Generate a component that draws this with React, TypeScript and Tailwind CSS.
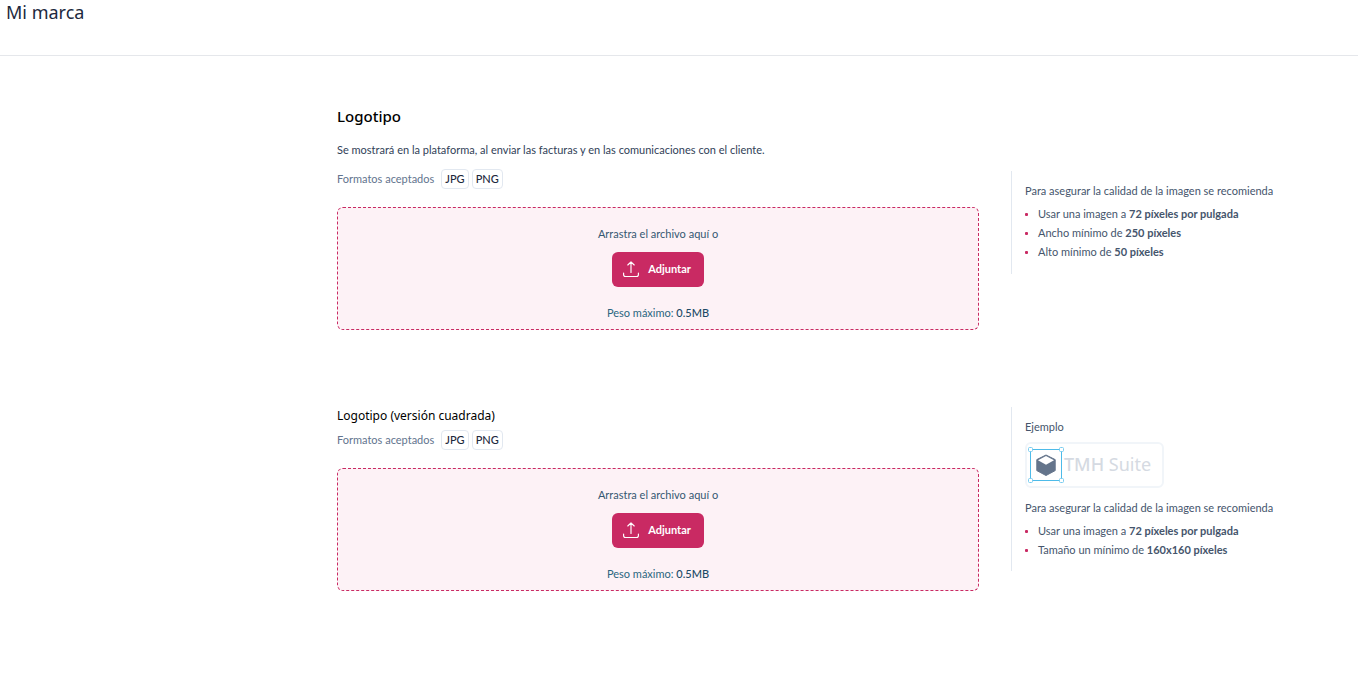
import type { ReactNode } from "react";

function Formats() {
  return (
    <div className="flex items-center gap-[3px] text-[11px] leading-[18px] text-slate-500">
      <span className="mr-1">Formatos aceptados</span>
      {["JPG", "PNG"].map((format) => (
        <span
          key={format}
          className="rounded border border-slate-200 px-[3px] font-medium text-slate-800"
        >
          {format}
        </span>
      ))}
    </div>
  );
}

function UploadIcon() {
  return (
    <svg
      aria-hidden="true"
      className="size-4"
      viewBox="0 0 16 16"
      fill="none"
      stroke="currentColor"
      strokeWidth="1.15"
      strokeLinecap="round"
      strokeLinejoin="round"
    >
      <path d="M8 11.5V0.8M4.8 4L8 0.8L11.2 4" />
      <path d="M0.6 12v1.7a1.8 1.8 0 0 0 1.8 1.8h11.2a1.8 1.8 0 0 0 1.8-1.8V12" />
    </svg>
  );
}

function Dropzone() {
  return (
    <div className="mt-[18px] flex flex-col items-center rounded-md border border-dashed border-[#c92a63] bg-[#fdf2f6] pt-[18px] pb-2 text-[11px] leading-4">
      <p className="text-[#355872]">Arrastra el archivo aquí o</p>
      <button
        type="button"
        className="mt-[10px] flex h-[35px] items-center gap-[9px] rounded-md bg-[#c92a63] pr-[13px] pb-px pl-[11px] font-bold text-white"
      >
        <UploadIcon />
        Adjuntar
      </button>
      <p className="mt-[18px] text-[#2b6680]">
        Peso máximo: <span className="font-medium text-[#1c4a66]">0.5MB</span>
      </p>
    </div>
  );
}

function Tips({ items }: { items: ReactNode[] }) {
  return (
    <>
      <p className="leading-4">Para asegurar la calidad de la imagen se recomienda</p>
      <ul className="mt-[5px] leading-[19px]">
        {items.map((item, index) => (
          <li key={index} className="flex items-center gap-[10px]">
            <span className="mt-[2px] size-[3px] rounded-[1px] bg-[#c92a63]" />
            <span>{item}</span>
          </li>
        ))}
      </ul>
    </>
  );
}

function ExampleLogo() {
  return (
    <div className="mt-[7px] mb-3 flex h-[46px] w-[139px] items-center rounded-md border-2 border-slate-100 pl-px">
      <svg aria-hidden="true" className="size-9 shrink-0" viewBox="0 0 36 36" fill="none">
        <rect x="2.5" y="2.5" width="31" height="31" stroke="#4dbbe9" />
        <path
          d="M18 8l9.200 4.600v11L18 28.500l-9.200-4.900v-11z"
          fill="#64748b"
          stroke="#64748b"
          strokeLinejoin="round"
        />
        <path d="M18 9l8 4.300-8 4.500-8-4.500z" fill="white" />
        <g fill="white" stroke="#7accef">
          <rect x="0.5" y="0.5" width="4" height="4" rx="1" />
          <rect x="31.5" y="0.5" width="4" height="4" rx="1" />
          <rect x="0.5" y="31.5" width="4" height="4" rx="1" />
          <rect x="31.5" y="31.5" width="4" height="4" rx="1" />
        </g>
      </svg>
      <span className="pb-[3px] font-['Noto_Sans','Open_Sans',sans-serif] text-[18px] leading-6 whitespace-nowrap text-[#d5dae2]">
        <span className="font-medium">TMH</span> <span>Suite</span>
      </span>
    </div>
  );
}

export default function App() {
  return (
    <div className="min-h-screen bg-white font-['Lato','Noto_Sans',sans-serif]">
      <header className="border-b border-gray-200 px-[6px] pb-[30px]">
        <h1 className="font-['Noto_Sans','Open_Sans',sans-serif] text-[18px] leading-[25px] text-slate-800">
          Mi marca
        </h1>
      </header>
      <main className="pt-12 pr-[42px]">
        <section className="grid grid-cols-4 items-start gap-8">
          <div className="col-span-2 col-start-2">
            <h2 className="font-['Noto_Sans','Open_Sans',sans-serif] text-[15px] leading-6 font-medium text-black">
              Logotipo
            </h2>
            <p className="mt-[14px] mb-[11px] text-[11px] leading-4 text-slate-700">
              Se mostrará en la plataforma, al enviar las facturas y en las comunicaciones con el
              cliente.
            </p>
            <Formats />
            <Dropzone />
          </div>
          <aside className="mt-[67px] border-l border-slate-200 pt-3 pb-[13px] pl-[13px] text-[11px] text-slate-600">
            <Tips
              items={[
                <>Usar una imagen a <strong>72 píxeles por pulgada</strong></>,
                <>Ancho mínimo de <strong>250 píxeles</strong></>,
                <>Alto mínimo de <strong>50 píxeles</strong></>,
              ]}
            />
          </aside>
        </section>
        <section className="mt-[77px] grid grid-cols-4 items-start gap-8">
          <div className="col-span-2 col-start-2">
            <h3 className="mb-[5px] font-['Noto_Sans','Open_Sans',sans-serif] text-[12px] leading-[18px] text-black">
              Logotipo (versión cuadrada)
            </h3>
            <Formats />
            <Dropzone />
          </div>
          <aside className="border-l border-slate-200 pt-3 pb-3 pl-[13px] text-[11px] text-slate-600">
            <p className="leading-4">Ejemplo</p>
            <ExampleLogo />
            <Tips
              items={[
                <>Usar una imagen a <strong>72 píxeles por pulgada</strong></>,
                <>Tamaño un mínimo de <strong>160x160 píxeles</strong></>,
              ]}
            />
          </aside>
        </section>
      </main>
    </div>
  );
}
